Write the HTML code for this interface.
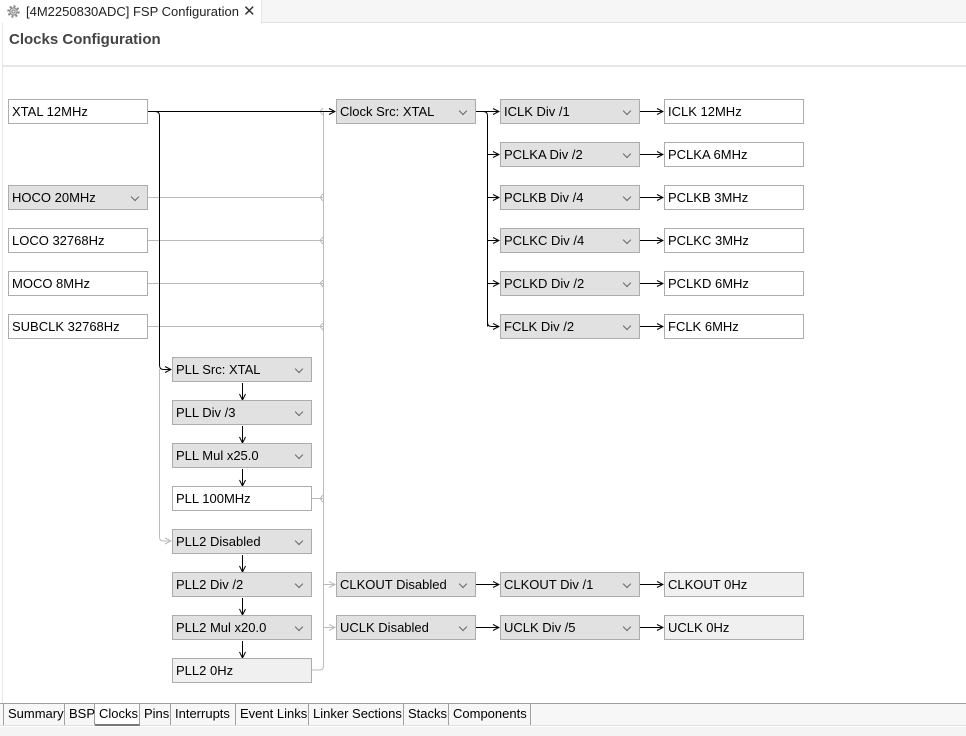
<!DOCTYPE html>
<html><head><meta charset="utf-8">
<style>
*{margin:0;padding:0;box-sizing:border-box}
body{width:966px;height:736px;background:#fff;font-family:"Liberation Sans","Noto Sans CJK SC",sans-serif;font-size:13px;color:#000;position:relative;overflow:hidden}
.topbar{position:absolute;left:0;top:0;width:966px;height:23px;background:#f6f6f6;border-bottom:1px solid #e2e2e2}
.tab{position:absolute;left:0;top:0;width:262px;height:24px;background:#fff;border-right:1px solid #e6e6e6}
.tab span{position:absolute;left:26px;top:4px;font-size:13px;color:#222}
.tab .x{position:absolute;left:243px;top:2px;font-size:15px;color:#333}
.title{position:absolute;left:9px;top:31px;font-weight:bold;font-size:15px;color:#444}
.sep{position:absolute;left:3px;top:65px;width:963px;height:2px;background:#e6e6e6}
.lb{position:absolute;left:2px;top:23px;width:1px;height:680px;background:#e6e6e6}
.b{position:absolute;width:140px;height:25px;border:1px solid #acacac;background:#fff;padding-left:3px;line-height:23px;font-size:13px;white-space:nowrap}
.d{background:#e1e1e1}
.d:after{content:"";position:absolute;right:9px;top:8px;width:5px;height:5px;border-right:1px solid #666;border-bottom:1px solid #666;transform:rotate(45deg)}
.l{background:#f0f0f0}
.tabs{position:absolute;left:0;top:703px;width:966px;height:23px;background:#f7f7f7;border-top:1px solid #a0a0a0;border-bottom:1px solid #e0e0e0}
.t{position:absolute;top:0;height:21px;line-height:20px;font-size:13px;padding-left:4px;border-right:1px solid #a0a0a0}
.bot{position:absolute;left:0;top:727px;width:966px;height:9px;background:#f4f4f4}
</style></head><body>
<div class="topbar"></div>
<div class="tab">
<svg style="position:absolute;left:6px;top:4px" width="15" height="15" viewBox="0 0 15 15"><circle cx="7.5" cy="7.5" r="5" fill="none" stroke="#888" stroke-width="2.4" stroke-dasharray="2 1.9"/><circle cx="7.5" cy="7.5" r="3.6" fill="#ddd" stroke="#888"/><circle cx="7.5" cy="7.5" r="1.5" fill="#fff" stroke="#888"/></svg>
<span>[4M2250830ADC] FSP Configuration</span><span class="x">✕</span></div>
<div class="title">Clocks Configuration</div>
<div class="sep"></div>
<div class="lb"></div>

<svg style="position:absolute;left:0;top:0" width="966" height="736">
<defs>
<marker id="ab" markerWidth="8" markerHeight="8" refX="7" refY="4" orient="auto" markerUnits="userSpaceOnUse"><path d="M1,1 L7,4 L1,7" fill="none" stroke="#000" stroke-width="1"/></marker>
<marker id="ag" markerWidth="8" markerHeight="8" refX="7" refY="4" orient="auto" markerUnits="userSpaceOnUse"><path d="M1,1 L7,4 L1,7" fill="none" stroke="#bbb" stroke-width="1"/></marker>
</defs>
<g fill="none" stroke="#bbb" stroke-width="1">
<path d="M323.5 111 V666 q0 4 -4 4 H312"/>
<path d="M148 197.5 H323"/>
<path d="M148 240.5 H323"/>
<path d="M148 283.5 H323"/>
<path d="M148 326.5 H323"/>
<path d="M312 498.5 H323"/>
<path d="M323 194 L320 197.5 L323 201 M323 237 L320 240.5 L323 244 M323 280 L320 283.5 L323 287 M323 323 L320 326.5 L323 330 M323 495 L320 498.5 L323 502 M323 108 L320 111.5 L323 115"/>
<path d="M159.5 369 V537 q0 4 4 4 H171" marker-end="url(#ag)"/>
<path d="M323.5 584.5 H335" marker-end="url(#ag)"/>
<path d="M323.5 627.5 H335" marker-end="url(#ag)"/>
</g>
<g fill="none" stroke="#000" stroke-width="1">
<path d="M148 111.5 H335" marker-end="url(#ab)"/>
<path d="M155 111.5 q4.5 0 4.5 4 V365 q0 4.5 4 4.5 H171" marker-end="url(#ab)"/>
<path d="M476 111.5 H499" marker-end="url(#ab)"/>
<path d="M483 111.5 q4.5 0 4.5 4 V326.5"/>
<path d="M487.5 154.5 H499" marker-end="url(#ab)"/>
<path d="M487.5 197.5 H499" marker-end="url(#ab)"/>
<path d="M487.5 240.5 H499" marker-end="url(#ab)"/>
<path d="M487.5 283.5 H499" marker-end="url(#ab)"/>
<path d="M487.5 322 q0 4.5 4 4.5 H499" marker-end="url(#ab)"/>
<path d="M640 111.5 H663" marker-end="url(#ab)"/>
<path d="M640 154.5 H663" marker-end="url(#ab)"/>
<path d="M640 197.5 H663" marker-end="url(#ab)"/>
<path d="M640 240.5 H663" marker-end="url(#ab)"/>
<path d="M640 283.5 H663" marker-end="url(#ab)"/>
<path d="M640 326.5 H663" marker-end="url(#ab)"/>
<path d="M640 584.5 H663" marker-end="url(#ab)"/>
<path d="M640 627.5 H663" marker-end="url(#ab)"/>
<path d="M476 584.5 H499" marker-end="url(#ab)"/>
<path d="M476 627.5 H499" marker-end="url(#ab)"/>
<path d="M242.5 383 V400" marker-end="url(#ab)"/>
<path d="M242.5 426 V443" marker-end="url(#ab)"/>
<path d="M242.5 469 V486" marker-end="url(#ab)"/>
<path d="M242.5 555 V572" marker-end="url(#ab)"/>
<path d="M242.5 598 V615" marker-end="url(#ab)"/>
<path d="M242.5 641 V658" marker-end="url(#ab)"/>
</g>
</svg>

<div class="b" style="left:8px;top:99px">XTAL 12MHz</div>
<div class="b d" style="left:8px;top:185px">HOCO 20MHz</div>
<div class="b" style="left:8px;top:228px">LOCO 32768Hz</div>
<div class="b" style="left:8px;top:271px">MOCO 8MHz</div>
<div class="b" style="left:8px;top:314px">SUBCLK 32768Hz</div>

<div class="b d" style="left:336px;top:99px">Clock Src: XTAL</div>

<div class="b d" style="left:500px;top:99px">ICLK Div /1</div>
<div class="b d" style="left:500px;top:142px">PCLKA Div /2</div>
<div class="b d" style="left:500px;top:185px">PCLKB Div /4</div>
<div class="b d" style="left:500px;top:228px">PCLKC Div /4</div>
<div class="b d" style="left:500px;top:271px">PCLKD Div /2</div>
<div class="b d" style="left:500px;top:314px">FCLK Div /2</div>

<div class="b" style="left:664px;top:99px">ICLK 12MHz</div>
<div class="b" style="left:664px;top:142px">PCLKA 6MHz</div>
<div class="b" style="left:664px;top:185px">PCLKB 3MHz</div>
<div class="b" style="left:664px;top:228px">PCLKC 3MHz</div>
<div class="b" style="left:664px;top:271px">PCLKD 6MHz</div>
<div class="b" style="left:664px;top:314px">FCLK 6MHz</div>

<div class="b d" style="left:172px;top:357px">PLL Src: XTAL</div>
<div class="b d" style="left:172px;top:400px">PLL Div /3</div>
<div class="b d" style="left:172px;top:443px">PLL Mul x25.0</div>
<div class="b" style="left:172px;top:486px">PLL 100MHz</div>
<div class="b d" style="left:172px;top:529px">PLL2 Disabled</div>
<div class="b d" style="left:172px;top:572px">PLL2 Div /2</div>
<div class="b d" style="left:172px;top:615px">PLL2 Mul x20.0</div>
<div class="b l" style="left:172px;top:658px">PLL2 0Hz</div>

<div class="b d" style="left:336px;top:572px">CLKOUT Disabled</div>
<div class="b d" style="left:336px;top:615px">UCLK Disabled</div>
<div class="b d" style="left:500px;top:572px">CLKOUT Div /1</div>
<div class="b d" style="left:500px;top:615px">UCLK Div /5</div>
<div class="b l" style="left:664px;top:572px">CLKOUT 0Hz</div>
<div class="b l" style="left:664px;top:615px">UCLK 0Hz</div>

<div class="tabs">
<div class="t" style="left:3px;width:62px;border-left:1px solid #a0a0a0">Summary</div>
<div class="t" style="left:65px;width:30px">BSP</div>
<div class="t" style="left:95px;width:45px;background:#fff;border-bottom:2px solid #777;height:22px">Clocks</div>
<div class="t" style="left:140px;width:31px">Pins</div>
<div class="t" style="left:171px;width:65px">Interrupts</div>
<div class="t" style="left:236px;width:73px">Event Links</div>
<div class="t" style="left:309px;width:95px">Linker Sections</div>
<div class="t" style="left:404px;width:45px">Stacks</div>
<div class="t" style="left:449px;width:82px">Components</div>
</div>
<div class="bot"></div>
</body></html>
